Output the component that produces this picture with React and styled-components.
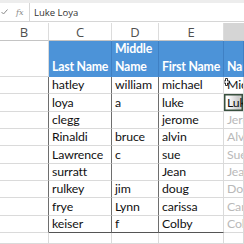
import React from "react";
import styled, { createGlobalStyle } from "styled-components";

const Global = createGlobalStyle`
  html, body { margin: 0; padding: 0; background: #fff; overflow: hidden; }
  body { width: 244px; height: 244px; }
`;

const Page = styled.div`
  width: 244px;
  height: 244px;
  overflow: hidden;
  display: flex;
  flex-direction: column;
  background: #fff;
`;

const TopStrip = styled.div`
  height: 3px;
  background: #ededed;
  flex: none;
`;

const FormulaBar = styled.div`
  height: 18px;
  flex: none;
  display: flex;
  align-items: center;
  border-bottom: 1px solid #d6d6d6;
  background: #fff;
`;

const IconArea = styled.div`
  width: 30px;
  height: 100%;
  display: flex;
  align-items: center;
  gap: 8px;
  padding-left: 1px;
  box-sizing: border-box;
  border-right: 1px solid #d6d6d6;
  color: #8a8a8a;
  font-family: "DejaVu Serif", serif;
  font-style: italic;
  font-size: 8px;
`;

const FormulaText = styled.div`
  padding-left: 4px;
  font-family: "Open Sans", sans-serif;
  font-size: 9.5px;
  color: #333;
`;

const Spacer = styled.div`
  height: 1px;
  flex: none;
`;

const Sheet = styled.div`
  flex: 1;
  display: grid;
  grid-template-columns: 49px 63px 47px 65px 1fr;
  grid-template-rows: 18px 36px repeat(9, 17.33px) 1fr;
  font-family: "Lato", "Open Sans", sans-serif;
`;

const Letter = styled.div`
  display: flex;
  align-items: center;
  justify-content: center;
  padding-top: 1px;
  font-family: "Open Sans", sans-serif;
  font-size: 13px;
  color: #505050;
  background: ${(p) => (p.$selected ? "#d5d5d5" : "#fff")};
  border-right: 1px solid ${(p) => (p.$selected ? "#d5d5d5" : "#dcdcdc")};
  border-bottom: 1px solid #c4c4c4;
`;

const HeadCell = styled.div`
  background: ${(p) => (p.$blank ? "#fff" : "#4c93d8")};
  color: #fff;
  font-weight: 700;
  font-size: 12.3px;
  letter-spacing: -0.2px;
  line-height: 18px;
  padding: 0 0 0 3px;
  white-space: pre;
  overflow: hidden;
  display: flex;
  align-items: flex-end;
  border-right: 1px solid ${(p) => (p.$blank ? "#dadada" : "#3f80c4")};
  border-bottom: 1px solid ${(p) => (p.$blank ? "#dadada" : "#4c93d8")};
`;

const Cell = styled.div`
  position: relative;
  display: flex;
  align-items: flex-end;
  padding: 0 0 1px 3px;
  font-size: 12.3px;
  line-height: 15px;
  letter-spacing: -0.1px;
  white-space: nowrap;
  overflow: hidden;
  color: ${(p) => (p.$ghost ? "#b9b9b9" : "#111")};
  border-right: 1px solid ${(p) => p.$rc || "#dadada"};
  border-bottom: 1px solid ${(p) => p.$bc || "#dadada"};
  background: ${(p) =>
    p.$active ? "linear-gradient(to right, #fff 20%, #cdcdcd 75%)" : "#fff"};
  box-shadow: ${(p) => (p.$active ? "inset 0 0 0 1.5px #39503f" : "none")};
`;

const Cursor = styled.svg`
  position: absolute;
  left: -1px;
  top: 1px;
`;

const DARK = "#6e6e6e";

const rows = [
  ["hatley", "william", "michael", "Mic"],
  ["loya", "a", "luke", "Luk"],
  ["clegg", "", "jerome", "Jero"],
  ["Rinaldi", "bruce", "alvin", "Alvi"],
  ["Lawrence", "c", "sue", "Sue"],
  ["surratt", "", "Jean", "Jea"],
  ["rulkey", "jim", "doug", "Dou"],
  ["frye", "Lynn", "carissa", "Car"],
  ["keiser", "f", "Colby", "Col"],
];

export default function App() {
  return (
    <Page>
      <Global />
      <TopStrip />
      <FormulaBar>
        <IconArea>
          <svg width="7" height="6" viewBox="0 0 7 6">
            <path d="M0.5 3 L2.5 5 L6.5 0.5" fill="none" stroke="#8a8a8a" strokeWidth="1" />
          </svg>
          <span>fx</span>
        </IconArea>
        <FormulaText>Luke Loya</FormulaText>
      </FormulaBar>
      <Spacer />
      <Sheet>
        <Letter>B</Letter>
        <Letter>C</Letter>
        <Letter>D</Letter>
        <Letter>E</Letter>
        <Letter $selected />

        <HeadCell $blank />
        <HeadCell>Last Name</HeadCell>
        <HeadCell>{"Middle\nName"}</HeadCell>
        <HeadCell>First Name</HeadCell>
        <HeadCell>Name</HeadCell>

        {rows.map((r, i) => {
          const last = i === rows.length - 1;
          const bc = last ? "#555" : undefined;
          return (
            <React.Fragment key={i}>
              <Cell $rc={DARK} />
              <Cell $rc={DARK} $bc={bc}>{r[0]}</Cell>
              <Cell $rc={DARK} $bc={bc}>{r[1]}</Cell>
              <Cell $bc={bc}>{r[2]}</Cell>
              <Cell $ghost={i > 1} $active={i === 1}>
                {i === 0 && (
                  <Cursor width="7" height="8" viewBox="0 0 7 8">
                    <path
                      d="M2.5 0.5 H4.5 V3 H6.5 V5 H4.5 V7.5 H2.5 V5 H0.5 V3 H2.5 Z"
                      fill="#fff"
                      stroke="#000"
                      strokeWidth="0.8"
                    />
                  </Cursor>
                )}
                {r[3]}
              </Cell>
            </React.Fragment>
          );
        })}
        <Cell />
        <Cell />
        <Cell />
        <Cell />
        <Cell />
      </Sheet>
    </Page>
  );
}
